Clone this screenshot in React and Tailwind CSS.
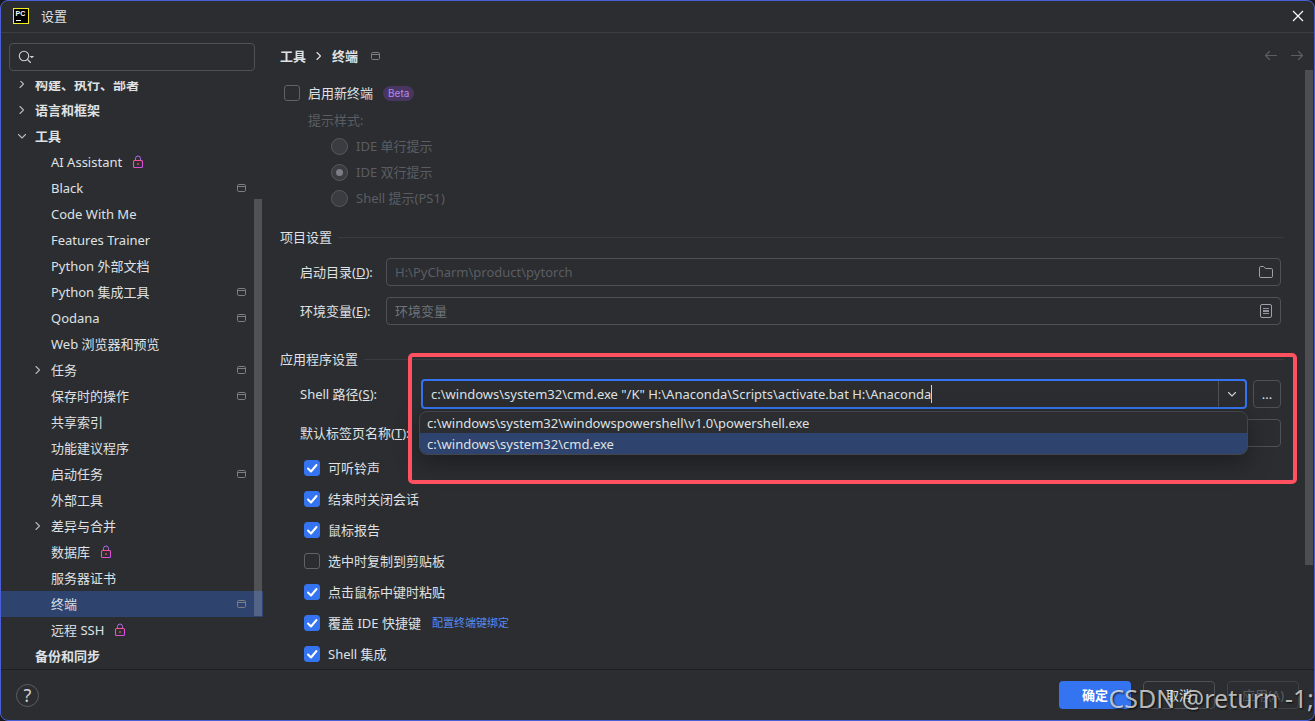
import { useState } from 'react'
import clsx from 'clsx'

const treeItems = [
  { label: '构建、执行、部署', level: 0, arrow: 'right' },
  { label: '语言和框架', level: 0, arrow: 'right' },
  { label: '工具', level: 0, arrow: 'down' },
  { label: 'AI Assistant', level: 1, locked: true },
  { label: 'Black', level: 1, project: true },
  { label: 'Code With Me', level: 1 },
  { label: 'Features Trainer', level: 1 },
  { label: 'Python 外部文档', level: 1 },
  { label: 'Python 集成工具', level: 1, project: true },
  { label: 'Qodana', level: 1, project: true },
  { label: 'Web 浏览器和预览', level: 1 },
  { label: '任务', level: 1, arrow: 'right', project: true },
  { label: '保存时的操作', level: 1, project: true },
  { label: '共享索引', level: 1 },
  { label: '功能建议程序', level: 1 },
  { label: '启动任务', level: 1, project: true },
  { label: '外部工具', level: 1 },
  { label: '差异与合并', level: 1, arrow: 'right' },
  { label: '数据库', level: 1, locked: true },
  { label: '服务器证书', level: 1 },
  { label: '终端', level: 1, project: true },
  { label: '远程 SSH', level: 1, locked: true },
  { label: '备份和同步', level: 0 },
]

const promptStyles = ['IDE 单行提示', 'IDE 双行提示', 'Shell 提示(PS1)']

const shellPaths = [
  'c:\\windows\\system32\\windowspowershell\\v1.0\\powershell.exe',
  'c:\\windows\\system32\\cmd.exe',
]

const options = [
  { label: '可听铃声', checked: true },
  { label: '结束时关闭会话', checked: true },
  { label: '鼠标报告', checked: true },
  { label: '选中时复制到剪贴板', checked: false },
  { label: '点击鼠标中键时粘贴', checked: true },
  { label: '覆盖 IDE 快捷键', checked: true, link: '配置终端键绑定' },
  { label: 'Shell 集成', checked: true },
]

function Chevron({ direction = 'right', className }) {
  return (
    <svg viewBox="0 0 16 16" className={clsx('h-4 w-4 shrink-0', className)} fill="none" stroke="currentColor" strokeWidth="1.1" strokeLinecap="round" strokeLinejoin="round">
      <path d={direction === 'right' ? 'M6 4.5 9.5 8 6 11.5' : 'M4.5 6.5 8 10l3.5-3.5'} />
    </svg>
  )
}

function ProjectIcon() {
  return (
    <svg viewBox="0 0 9 8" className="h-2 w-[9px] shrink-0 text-[#7b7e85]" fill="none" stroke="currentColor">
      <rect x="0.5" y="0.5" width="8" height="7" rx="1.2" />
      <path d="M1 2.5h7" />
    </svg>
  )
}

function LockIcon() {
  return (
    <svg viewBox="0 0 12 14" className="h-[14px] w-3 shrink-0" fill="none">
      <defs>
        <linearGradient id="lock" x1="0" y1="0" x2="1" y2="1">
          <stop offset="0" stopColor="#ff4f8b" />
          <stop offset="0.4" stopColor="#f94fa5" />
          <stop offset="1" stopColor="#c650f0" />
        </linearGradient>
      </defs>
      <path d="M3.5 5.5V3.500a2.5 2.500 0 0 1 5 0v2" stroke="#b06af0" />
      <rect x="1.500" y="5.500" width="9" height="7" rx="1" stroke="url(#lock)" strokeWidth="1.100" />
      <path d="M6 8v2" stroke="#c9506f" strokeWidth="1.5" />
    </svg>
  )
}

function Checkbox({ label, defaultChecked }) {
  return (
    <label className="flex items-center gap-2">
      <span className="relative flex h-4 w-4 shrink-0">
        <input
          type="checkbox"
          defaultChecked={defaultChecked}
          className="peer h-4 w-4 appearance-none rounded-[3px] border border-[#5f6269] checked:border-[#3574f0] checked:bg-[#3574f0]"
        />
        <svg viewBox="0 0 16 16" className="pointer-events-none absolute inset-0 hidden h-4 w-4 peer-checked:block" fill="none" stroke="white" strokeWidth="2" strokeLinecap="round" strokeLinejoin="round">
          <path d="m4 8.5 3 3 5.5-6.5" />
        </svg>
      </span>
      {label}
    </label>
  )
}

function SectionTitle({ children }) {
  return (
    <div className="flex h-5 items-center gap-[6px]">
      <h2>{children}</h2>
      <div className="h-px grow bg-[#393b40]" />
    </div>
  )
}

function TreeRow({ item, selected, onSelect }) {
  return (
    <li className="shrink-0">
      <button
        type="button"
        onClick={onSelect}
        className={clsx(
          'flex h-[26px] w-full items-center pr-[17px] text-left',
          item.level === 0 ? 'pl-[13px] font-bold' : 'pl-[29px]',
          selected && 'bg-[#2e436e]'
        )}
      >
        <span className="flex w-[21px] shrink-0 text-[#b4b8bf]">
          {item.arrow && <Chevron direction={item.arrow} />}
        </span>
        <span>{item.label}</span>
        {item.locked && <span className="ml-[10px]"><LockIcon /></span>}
        {item.project && <span className="ml-auto"><ProjectIcon /></span>}
      </button>
    </li>
  )
}

function Sidebar() {
  const [selected, setSelected] = useState('终端')

  return (
    <aside className="flex w-[262px] shrink-0 flex-col pt-[10px]">
      <label className="mr-2 ml-2 flex h-7 shrink-0 items-center rounded border border-[#4e5157] pl-2">
        <svg viewBox="0 0 18 16" className="h-4 w-[18px] shrink-0 text-[#ced0d6]" fill="none" stroke="currentColor" strokeWidth="1.1" strokeLinecap="round">
          <circle cx="6" cy="7" r="4.7" />
          <path d="m9.5 10.5 3 3" />
          <path d="M11.5 7h4.6l-2.3 2.3z" fill="currentColor" stroke="none" />
        </svg>
        <input type="text" aria-label="搜索" className="min-w-0 grow bg-transparent px-1 outline-none" />
      </label>
      <nav className="relative mt-[10px] min-h-0 grow overflow-hidden">
        <ul className="flex h-full flex-col justify-end">
          {treeItems.map((item) => (
            <TreeRow
              key={item.label}
              item={item}
              selected={item.label === selected}
              onSelect={() => setSelected(item.label)}
            />
          ))}
        </ul>
        <div className="absolute top-[20%] right-px bottom-[9%] w-2 bg-white/18" />
      </nav>
    </aside>
  )
}

function ShellPathField() {
  const [path, setPath] = useState('c:\\windows\\system32\\cmd.exe "/K" H:\\Anaconda\\Scripts\\activate.bat H:\\Anaconda')
  const [open, setOpen] = useState(true)

  return (
    <div className="relative flex grow gap-[6px]">
      <div className="flex h-[30px] grow items-center rounded border-2 border-[#3574f0] pl-2">
        <input
          id="shell-path"
          type="text"
          value={path}
          onChange={(e) => setPath(e.target.value)}
          className="field-sizing-content bg-transparent caret-transparent outline-none"
        />
        <span className="h-[18px] w-px bg-[#ced0d6]" />
        <button
          type="button"
          aria-label="展开"
          onClick={() => setOpen(!open)}
          className="ml-auto flex h-full w-[27px] items-center justify-center border-l border-[#4e5157] text-[#ced0d6]"
        >
          <Chevron direction="down" />
        </button>
      </div>
      <button type="button" aria-label="浏览" className="my-px h-7 w-7 shrink-0 rounded border border-[#4e5157]">
        ...
      </button>
      {open && (
        <ul className="absolute top-8 right-[33px] -left-[2px] z-10 overflow-hidden rounded-lg border border-[#43454a] bg-[#2b2d30] shadow-[0_8px_24px_rgba(0,0,0,0.35)]">
          {shellPaths.map((shell, i) => (
            <li key={shell}>
              <button
                type="button"
                onClick={() => {
                  setPath(shell)
                  setOpen(false)
                }}
                className={clsx('block h-[21px] w-full px-[7px] text-left', i === 1 && 'bg-[#2e436e]')}
              >
                {shell}
              </button>
            </li>
          ))}
        </ul>
      )}
      {/* highlight frame around the shell settings */}
      <div className="pointer-events-none absolute -top-[26px] -right-4 -left-[13px] z-20 h-[131px] rounded-[5px] border-4 border-[#ff5160]" />
    </div>
  )
}

function TerminalSettings() {
  return (
    <main className="relative flex min-w-0 grow flex-col pl-[17px]">
      <header className="flex h-[37px] shrink-0 items-end justify-between pr-[9px]">
        <h1 className="flex h-7 items-center font-bold">
          工具
          <Chevron className="mx-[5px]" />
          终端
          <span className="ml-[13px]"><ProjectIcon /></span>
        </h1>
        <div className="flex h-7 items-center gap-[10px] text-[#5a5d63]">
          <button type="button" aria-label="后退">
            <svg viewBox="0 0 16 16" className="h-4 w-4" fill="none" stroke="currentColor" strokeWidth="1.2" strokeLinecap="round" strokeLinejoin="round">
              <path d="M13.5 7.500h-11M6.500 3.500l-4 4 4 4" />
            </svg>
          </button>
          <button type="button" aria-label="前进">
            <svg viewBox="0 0 16 16" className="h-4 w-4" fill="none" stroke="currentColor" strokeWidth="1.2" strokeLinecap="round" strokeLinejoin="round">
              <path d="M2.5 7.500h11M9.500 3.500l4 4-4 4" />
            </svg>
          </button>
        </div>
      </header>

      <div className="min-h-0 grow overflow-hidden pr-[30px]">
        <div className="mt-[15px] mb-[11px] flex h-4 items-center gap-[10px] pl-1">
          <Checkbox label="启用新终端" />
          <span className="rounded-full bg-[#483560] px-[5px] font-['Inter',sans-serif] text-[10px] leading-[15px] text-[#b589ec]">Beta</span>
        </div>
        <fieldset disabled className="pl-7 text-[#5a5d63]">
          <legend className="h-4 leading-4">提示样式:</legend>
          <div className="mt-[5px] pl-[23px]">
            {promptStyles.map((style, i) => (
              <label key={style} className="flex h-[26px] items-center gap-2">
                <span className="relative flex h-[17px] w-[17px] shrink-0">
                  <input
                    type="radio"
                    name="prompt-style"
                    defaultChecked={i === 1}
                    className="peer h-[17px] w-[17px] appearance-none rounded-full border border-[#56595f] bg-[#3a3c41]"
                  />
                  <span className="pointer-events-none absolute inset-[5px] hidden rounded-full bg-[#7a7d83] peer-checked:block" />
                </span>
                {style}
              </label>
            ))}
          </div>
        </fieldset>

        <div className="mt-4">
          <SectionTitle>项目设置</SectionTitle>
        </div>
        <div className="mt-[11px] mr-[3px] ml-5 grid grid-cols-[86px_1fr] items-center gap-y-[11px]">
          <label htmlFor="start-dir">启动目录(<u>D</u>):</label>
          <div className="flex h-7 items-center rounded border border-[#4e5157] pr-[7px] pl-2">
            <input id="start-dir" type="text" placeholder="H:\PyCharm\product\pytorch" className="min-w-0 grow bg-transparent outline-none placeholder:text-[#5a5d63]" />
            <svg viewBox="0 0 14 12" className="h-3 w-[14px] shrink-0 text-[#9da0a8]" fill="none" stroke="currentColor">
              <path d="M.5 1.8A1.3 1.3 0 0 1 1.8.5h2.7l2 2h5.7a1.3 1.3 0 0 1 1.3 1.3v6.400a1.300 1.300 0 0 1-1.300 1.300H1.800A1.300 1.300 0 0 1 .5 10.200z" />
            </svg>
          </div>
          <label htmlFor="env-vars">环境变量(<u>E</u>):</label>
          <div className="flex h-7 items-center rounded border border-[#4e5157] pr-2 pl-2">
            <input id="env-vars" type="text" placeholder="环境变量" className="min-w-0 grow bg-transparent outline-none placeholder:text-[#6f737a]" />
            <svg viewBox="0 0 12 14" className="h-[14px] w-3 shrink-0 text-[#9da0a8]" fill="none" stroke="currentColor">
              <rect x="0.5" y="0.5" width="11" height="13" rx="1.5" />
              <path d="M3 4.5h6M3 6.5h6M3 7.5h6M3 9.5h6" strokeWidth="0.9" />
            </svg>
          </div>
        </div>

        <div className="mt-6">
          <SectionTitle>应用程序设置</SectionTitle>
        </div>
        <div className="mt-[10px] mr-[3px] ml-5 grid grid-cols-[121px_1fr] items-center gap-y-[10px]">
          <label htmlFor="shell-path">Shell 路径(<u>S</u>):</label>
          <ShellPathField />
          <label htmlFor="tab-name" className="whitespace-nowrap">默认标签页名称(<u>T</u>):</label>
          <input id="tab-name" type="text" className="h-7 w-full rounded border border-[#4e5157] bg-transparent px-2 outline-none" />
        </div>
        <div className="mt-[5px] pl-6">
          {options.map((option) => (
            <div key={option.label} className="flex h-[31px] items-center gap-[11px]">
              <Checkbox label={option.label} defaultChecked={option.checked} />
              {option.link && <a href="#keymap" className="text-[11px] text-[#548af7]">{option.link}</a>}
            </div>
          ))}
        </div>
      </div>
      <div className="absolute top-[37px] right-px bottom-[104px] w-2 bg-[#4d4e51]" />
    </main>
  )
}

export default function App() {
  return (
    <div className="h-screen bg-[#17181b] font-['Noto_Sans','Noto_Sans_CJK_SC',sans-serif] text-[13px] leading-5 text-[#dfe1e5]">
      <div className="relative flex h-full flex-col overflow-hidden rounded-lg border border-[#4a5fd6] bg-[#2b2d30]">
        <div className="flex h-8 shrink-0 items-center border-b border-[#3c3e42] pr-[10px] pb-[2px] pl-3">
          <svg viewBox="0 0 16 16" className="h-4 w-4">
            <rect x="0.5" y="0.5" width="15" height="15" fill="#000" stroke="#f5ec1c" />
            <text x="2.5" y="8" fontSize="7" fontWeight="bold" fill="#fff" fontFamily="Liberation Sans, sans-serif">PC</text>
            <path d="M3 12.5h5" stroke="#fff" />
          </svg>
          <span className="ml-3">设置</span>
          <button type="button" aria-label="关闭" className="ml-auto">
            <svg viewBox="0 0 12 12" className="h-3 w-3" fill="none" stroke="white" strokeWidth="1.1">
              <path d="m1 1 10 10M11 1 1 11" />
            </svg>
          </button>
        </div>

        <div className="flex min-h-0 grow">
          <Sidebar />
          <TerminalSettings />
        </div>

        <footer className="flex h-[51px] shrink-0 items-center gap-3 border-t border-[#1e1f22] pr-[15px] pl-[15px]">
          <button type="button" aria-label="帮助" className="mr-auto flex h-[23px] w-[23px] items-center justify-center rounded-full border border-[#5a5d63] text-lg text-[#ced0d6]">
            ?
          </button>
          <button type="button" className="h-7 w-[72px] rounded bg-[#3574f0] font-bold text-white">确定</button>
          <button type="button" className="h-7 w-[72px] rounded border border-[#4e5157]">取消</button>
          <button type="button" disabled className="h-7 w-[72px] rounded border border-[#3f4146] text-[#5a5d63]">应用(A)</button>
        </footer>

        <div className="pointer-events-none absolute right-0 bottom-1 text-[25px] leading-9 whitespace-nowrap text-white/70 [text-shadow:1px_1px_2px_rgba(0,0,0,0.8)]">
          CSDN @return -1;
        </div>
      </div>
    </div>
  )
}
